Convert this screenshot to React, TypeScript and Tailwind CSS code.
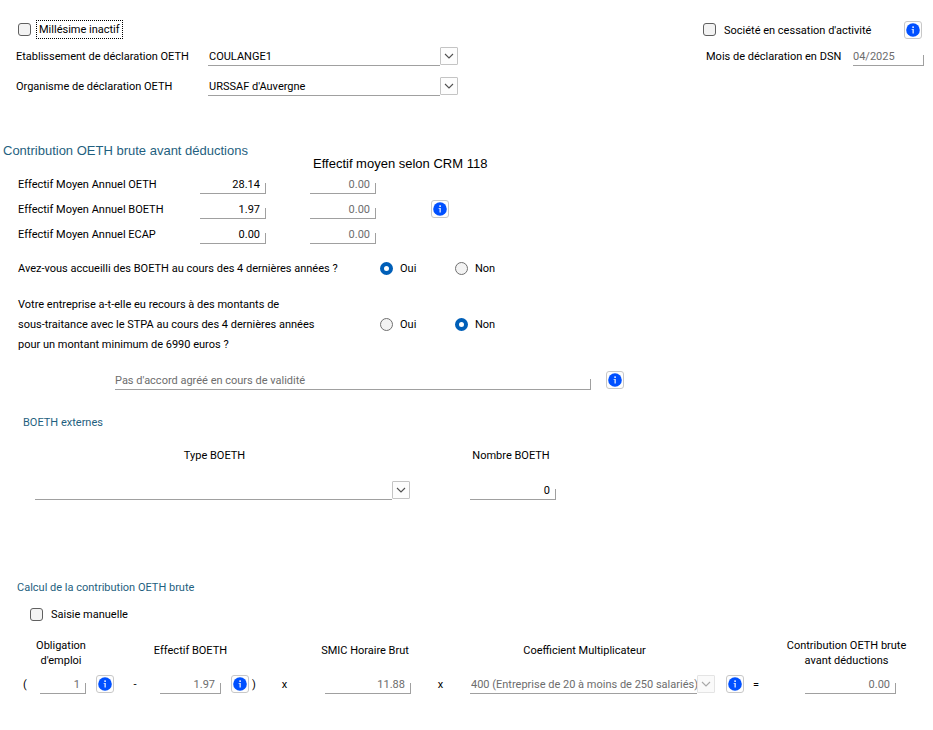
import type { ReactNode } from "react";

const titleColor = "text-[#1f5f80]";

function InfoButton({ label }: { label: string }) {
  return (
    <button
      type="button"
      aria-label={label}
      className="flex size-[18px] shrink-0 items-center justify-center rounded-[3px] border border-[#c8c8c8] bg-[#fdfdfd]"
    >
      <svg width="14" height="14" viewBox="0 0 14 14" aria-hidden="true">
        <circle cx="7" cy="7" r="6.8" fill="#0050ff" />
        <rect x="6.3" y="3.4" width="1.6" height="1.5" fill="#fff" />
        <path d="M5.6 6h2.2v4.6H6.5V6.8h-.9z" fill="#dfe9ff" />
      </svg>
    </button>
  );
}

type FieldProps = {
  id: string;
  value: string;
  width: string;
  muted?: boolean;
  align?: "left" | "right";
  label?: string;
};

function Field({ id, value, width, muted, align = "right", label }: FieldProps) {
  return (
    <div
      className={`relative h-[19px] shrink-0 after:absolute after:right-0 after:bottom-0 after:h-[11px] after:w-px after:bg-[#a0a0a0] ${width}`}
    >
      <input
        id={id}
        type="text"
        aria-label={label}
        defaultValue={value}
        readOnly={muted}
        className={`block h-[19px] w-full border-b border-[#a0a0a0] bg-transparent pt-0.5 outline-none ${
          align === "right" ? "pr-1.5 text-right" : ""
        } ${muted ? "text-[#6d6d6d]" : "text-black"}`}
      />
    </div>
  );
}

type SelectProps = {
  id: string;
  value: string;
  width: string;
  disabled?: boolean;
};

function SelectField({ id, value, width, disabled }: SelectProps) {
  return (
    <div className={`flex h-[19px] shrink-0 ${width}`}>
      <select
        id={id}
        disabled={disabled}
        className={`h-[19px] min-w-0 flex-1 appearance-none border-b border-[#a0a0a0] bg-transparent pb-0.5 pl-px opacity-100 outline-none ${
          disabled ? "text-[#6d6d6d]" : "text-black"
        }`}
      >
        <option>{value}</option>
      </select>
      <span
        className={`flex size-[18px] shrink-0 items-center justify-center rounded-[1px] border ${
          disabled ? "border-[#e4e4e4] bg-[#fafafa] text-[#a8a8a8]" : "border-[#c4c4c4] bg-[#fdfdfd] text-[#505050]"
        }`}
      >
        <svg width="10" height="6" viewBox="0 0 10 6" fill="none" stroke="currentColor" strokeWidth="1.1" aria-hidden="true">
          <path d="M1 1l4 4 4-4" />
        </svg>
      </span>
    </div>
  );
}

function Check({ id }: { id: string }) {
  return (
    <input
      id={id}
      type="checkbox"
      className="size-[13px] shrink-0 appearance-none rounded-[3px] border border-[#606060] bg-[#f3f3f3] checked:bg-[#005fb8]"
    />
  );
}

function Radio({ name, label, checked }: { name: string; label: string; checked?: boolean }) {
  return (
    <label className="flex w-[75px] items-center gap-[7px]">
      <input
        type="radio"
        name={name}
        defaultChecked={checked}
        className="size-[13px] shrink-0 appearance-none rounded-full border border-[#707070] bg-[#f3f3f3] checked:border-4 checked:border-[#005fb8] checked:bg-white"
      />
      <span className="pt-0.5">{label}</span>
    </label>
  );
}

function TermLabel({ htmlFor, children, pad = "" }: { htmlFor: string; children: ReactNode; pad?: string }) {
  return (
    <div className={`flex items-center justify-center ${pad}`}>
      <label htmlFor={htmlFor} className="text-center leading-[15px]">
        {children}
      </label>
    </div>
  );
}

const headcounts = [
  { id: "oeth", label: "Effectif Moyen Annuel OETH", value: "28.14", info: false },
  { id: "boeth", label: "Effectif Moyen Annuel BOETH", value: "1.97", info: true },
  { id: "ecap", label: "Effectif Moyen Annuel ECAP", value: "0.00", info: false },
];

export default function App() {
  return (
    <main className="min-h-screen bg-white pt-5 font-[Roboto,'Liberation_Sans',sans-serif] text-[11px] leading-5 whitespace-nowrap text-black">
      <header className="flex justify-between pr-[9px] pl-4">
        <div className="flex flex-col">
          <div className="flex h-[19px] items-center pl-0.5">
            <Check id="inactif" />
            <label htmlFor="inactif" className="ml-[5px] border border-dotted border-black px-0.5 leading-[17px]">
              Millésime inactif
            </label>
          </div>
          <div className="mt-[7px] flex h-5 items-center">
            <label htmlFor="etablissement" className="w-48 pt-0.5">Etablissement de déclaration OETH</label>
            <SelectField id="etablissement" value="COULANGE1" width="w-[250px]" />
          </div>
          <div className="mt-2.5 flex h-5 items-center">
            <label htmlFor="organisme" className="w-48 pt-0.5">Organisme de déclaration OETH</label>
            <SelectField id="organisme" value="URSSAF d'Auvergne" width="w-[250px]" />
          </div>
        </div>
        <div className="flex w-[221px] flex-col">
          <div className="flex h-[19px] items-center">
            <Check id="cessation" />
            <label htmlFor="cessation" className="ml-2 flex-1 pt-0.5">Société en cessation d'activité</label>
            <div className="mr-0.5 flex"><InfoButton label="Informations sur la cessation" /></div>
          </div>
          <div className="mt-[7px] flex h-5 items-center justify-between pl-[3px]">
            <label htmlFor="mois" className="pt-0.5">Mois de déclaration en DSN</label>
            <Field id="mois" value="04/2025" width="w-[71px]" align="left" muted />
          </div>
        </div>
      </header>

      <section className="mt-[45px]">
        <div className="flex h-[33px] pl-[3px] font-['Liberation_Sans',Arial,sans-serif] text-[13px]">
          <h2 className={`w-[310px] ${titleColor}`}>Contribution OETH brute avant déductions</h2>
          <h3 className="self-end">Effectif moyen selon CRM 118</h3>
        </div>
        <div className="mt-px flex flex-col gap-1.5 pl-[18px]">
          {headcounts.map((row) => (
            <div key={row.id} className="flex h-[19px] items-center">
              <label htmlFor={row.id} className="w-[182px]">{row.label}</label>
              <Field id={row.id} value={row.value} width="w-[66px]" />
              <div className="ml-11">
                <Field id={`${row.id}-crm`} value="0.00" width="w-[66px]" label={`${row.label} selon CRM 118`} muted />
              </div>
              {row.info && <div className="ml-[55px] flex self-start"><InfoButton label="Informations sur les BOETH" /></div>}
            </div>
          ))}
        </div>

        <fieldset className="mt-[13px] flex items-center pl-[18px]">
          <span className="w-[362px] pt-0.5">Avez-vous accueilli des BOETH au cours des 4 dernières années ?</span>
          <Radio name="accueil" label="Oui" checked />
          <Radio name="accueil" label="Non" />
        </fieldset>
        <fieldset className="mt-3.5 flex items-center pl-[18px]">
          <p className="w-[362px] pt-0.5">
            Votre entreprise a-t-elle eu recours à des montants de
            <br />
            sous-traitance avec le STPA au cours des 4 dernières années
            <br />
            pour un montant minimum de 6990 euros ?
          </p>
          <Radio name="stpa" label="Oui" />
          <Radio name="stpa" label="Non" checked />
        </fieldset>
        <div className="mt-4 flex gap-[15px] pl-[115px]">
          <Field id="accord" value="Pas d'accord agréé en cours de validité" width="w-[476px]" label="Accord agréé" align="left" muted />
          <InfoButton label="Informations sur l'accord" />
        </div>
      </section>

      <section className="mt-[23px]">
        <h2 className={`pl-[23px] ${titleColor}`}>BOETH externes</h2>
        <div className="mt-[13px] grid grid-cols-[375px_86px] gap-x-[60px] gap-y-[15px] pl-[35px]">
          <label htmlFor="type-boeth" className="pr-4 text-center">Type BOETH</label>
          <label htmlFor="nombre-boeth" className="pr-1 text-center">Nombre BOETH</label>
          <SelectField id="type-boeth" value="" width="w-[375px]" />
          <Field id="nombre-boeth" value="0" width="w-[86px]" />
        </div>
      </section>

      <section className="mt-[78px]">
        <h2 className={`pl-[17px] ${titleColor}`}>Calcul de la contribution OETH brute</h2>
        <div className="mt-[5px] flex items-center pl-[30px]">
          <Check id="saisie" />
          <label htmlFor="saisie" className="ml-2 pt-0.5">Saisie manuelle</label>
        </div>
        <div className="mt-[13px] grid grid-cols-[17px_46px_28px_46px_61px_28px_76px_86px_59px_245px_29px_61px_91px] grid-rows-[30px_19px] gap-y-[7px] pl-[23px]">
          <span />
          <TermLabel htmlFor="obligation" pad="pr-1">Obligation<br />d'emploi</TermLabel>
          <span />
          <span />
          <TermLabel htmlFor="effectif-boeth" pad="pb-1.5">Effectif BOETH</TermLabel>
          <span />
          <span />
          <TermLabel htmlFor="smic" pad="pr-1.5 pb-1.5">SMIC Horaire Brut</TermLabel>
          <span />
          <TermLabel htmlFor="coefficient" pad="pr-4 pb-1.5">Coefficient Multiplicateur</TermLabel>
          <span />
          <span />
          <TermLabel htmlFor="contribution" pad="pr-2">Contribution OETH brute<br />avant déductions</TermLabel>

          <span>(</span>
          <Field id="obligation" value="1" width="w-[46px]" muted />
          <div className="flex justify-end"><InfoButton label="Informations sur l'obligation" /></div>
          <span className="pr-1 text-center">-</span>
          <Field id="effectif-boeth" value="1.97" width="w-[61px]" muted />
          <div className="flex justify-end"><InfoButton label="Informations sur l'effectif" /></div>
          <div className="flex gap-[26px] pl-[3px]"><span>)</span><span>x</span></div>
          <Field id="smic" value="11.88" width="w-[86px]" muted />
          <span className="text-center">x</span>
          <SelectField id="coefficient" value="400 (Entreprise de 20 à moins de 250 salariés)" width="w-[245px]" disabled />
          <div className="flex justify-end"><InfoButton label="Informations sur le coefficient" /></div>
          <span className="pl-[9px]">=</span>
          <Field id="contribution" value="0.00" width="w-[91px]" muted />
        </div>
      </section>
    </main>
  );
}
